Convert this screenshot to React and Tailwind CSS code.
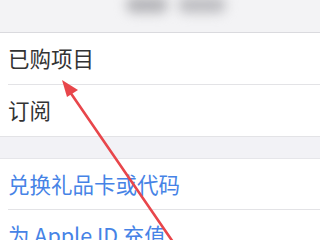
export default function App() {
  return (
    <div className="relative w-[320px] h-[240px] overflow-hidden bg-white font-['Noto_Sans_CJK_SC',sans-serif]">
      {/* 顶部（模糊） */}
      <div className="h-[33px] bg-[#f3f3f5] border-b border-[#dadade] flex justify-center gap-[10px] pl-[32px] overflow-hidden">
        <div className="w-[42px] h-[16px] -mt-[3px] rounded-full bg-[#b4b4b8] blur-[6px]" />
        <div className="w-[48px] h-[16px] -mt-[3px] rounded-full bg-[#bdbdc1] blur-[6px]" />
      </div>

      <div className="h-[51px] flex items-center pl-2 text-[21.5px] text-[#333333]">已购项目</div>
      <div className="ml-2 border-b border-[#e3e3e6]" />
      <div className="h-[52px] flex items-center pl-2 text-[21.5px] text-[#333333] border-b border-[#e3e3e6]">订阅</div>

      <div className="h-[22px] bg-[#f2f2f6] border-b border-[#e6e6ea]" />

      <div className="h-[50px] flex items-center pl-2 text-[21.5px] text-[#4683e6]">兑换礼品卡或代码</div>
      <div className="ml-2 border-b border-[#e3e3e6]" />
      <div className="h-[50px] flex items-center pl-2 text-[21.5px] text-[#4683e6]">为 Apple ID 充值</div>

      {/* 标注箭头 */}
      <svg className="absolute inset-0" width="320" height="240" viewBox="0 0 320 240">
        <line x1="70" y1="92" x2="173" y2="242" stroke="#e8464b" strokeWidth="2.6" strokeLinecap="round" />
        <polygon points="62,80 78,90 67,97" fill="#e8464b" />
      </svg>
    </div>
  )
}
